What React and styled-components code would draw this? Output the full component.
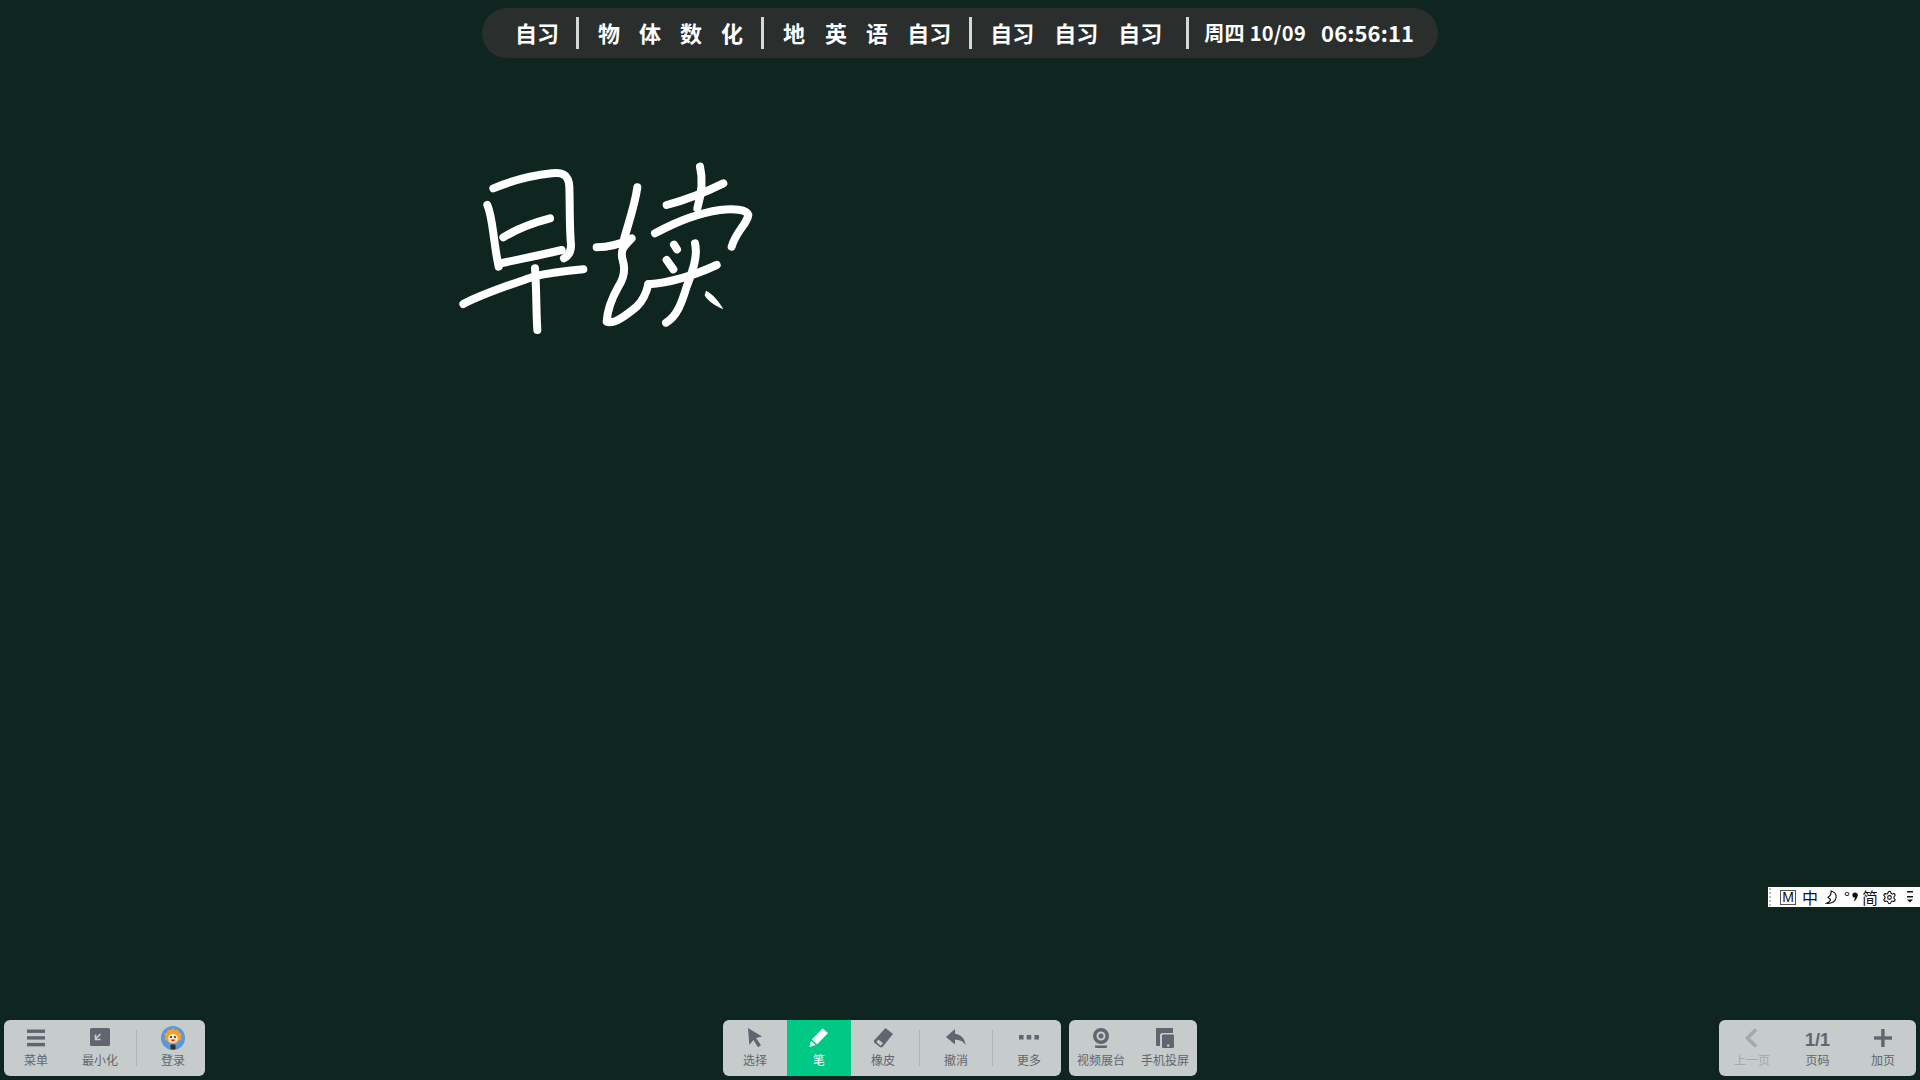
import React from "react";
import styled, { createGlobalStyle } from "styled-components";
import { Settings } from "lucide-react";

const GlobalStyle = createGlobalStyle`
  html, body {
    margin: 0;
    height: 100%;
    background: #0e261f;
    overflow: hidden;
  }
  #root { height: 100%; }
`;

const cjk = `"Noto Sans CJK SC", "Noto Sans", sans-serif`;

const Page = styled.div`
  position: relative;
  width: 1920px;
  height: 1080px;
  display: flex;
  flex-direction: column;
  background: #0e261f;
  font-family: ${cjk};
`;

const TopRow = styled.div`
  display: flex;
  justify-content: center;
  padding-top: 8px;
`;

const Schedule = styled.div`
  width: 956px;
  height: 50px;
  box-sizing: border-box;
  padding: 0 0 2px 33px;
  border-radius: 25px;
  background: #2a2f2e;
  display: flex;
  align-items: center;
  color: #fff;
`;

const Period = styled.span`
  flex-shrink: 0;
  font-size: 22px;
  font-weight: 700;
  line-height: 1;
  white-space: nowrap;
  margin-right: ${(p) => p.$gap}px;
`;

const Sep = styled.i`
  display: block;
  flex-shrink: 0;
  width: 3px;
  height: 32px;
  margin-top: 2px;
  background: #d6d8d7;
  margin-right: ${(p) => p.$gap}px;
`;

const Clock = styled.span`
  display: flex;
  align-items: center;
  gap: 15px;
  font-family: "Noto Sans CJK SC", "Open Sans", sans-serif;
  font-weight: 700;
  white-space: nowrap;
`;

const DateText = styled.span`
  font-size: 20px;
  letter-spacing: 0.3px;
`;

const TimeText = styled.span`
  font-size: 22px;
  letter-spacing: 0.1px;
`;

const Board = styled.div`
  flex: 1;
  position: relative;
`;

const Ink = styled.svg`
  position: absolute;
  left: 440px;
  top: 92px;
  width: 330px;
  height: 190px;
`;

const ImeBar = styled.div`
  position: absolute;
  left: 1768px;
  top: 887px;
  width: 152px;
  height: 20px;
  background: #fff;
  display: flex;
  align-items: center;
  color: #111;
  font-family: ${cjk};
`;

const ImeGrip = styled.i`
  width: 0;
  height: 18px;
  margin: 0 9px 0 1px;
  border-left: 2px dotted #bbb;
`;

const ImeMode = styled.span`
  flex-shrink: 0;
  width: 16px;
  height: 15px;
  box-sizing: border-box;
  border: 1px solid #555;
  font: 14px/13px "Liberation Sans", sans-serif;
  text-align: center;
  margin-right: ${(p) => p.$gap}px;
`;

const ImeGlyph = styled.span`
  flex-shrink: 0;
  font-size: 16px;
  line-height: 20px;
  width: ${(p) => p.$w || 16}px;
  text-align: center;
  margin-right: ${(p) => p.$gap || 0}px;
`;

const ImeIcon = styled.span`
  flex-shrink: 0;
  display: flex;
  margin-right: ${(p) => p.$gap || 0}px;
`;

const BottomRow = styled.div`
  display: grid;
  grid-template-columns: 1fr auto 1fr;
  align-items: end;
  padding: 0 4px 4px;
`;

const Side = styled.div`
  display: flex;
  justify-content: ${(p) => (p.$end ? "flex-end" : "flex-start")};
`;

const Center = styled.div`
  display: flex;
  gap: 8px;
`;

const Toolbar = styled.div`
  display: flex;
  height: 56px;
  background: #c5cccb;
  border-radius: 6px;
  overflow: hidden;
`;

const Tool = styled.div`
  width: ${(p) => p.$w || 64}px;
  height: 56px;
  box-sizing: border-box;
  padding-top: 7px;
  display: flex;
  flex-direction: column;
  align-items: center;
  background: ${(p) => (p.$active ? "#00c986" : "transparent")};
  color: ${(p) => (p.$active ? "#fff" : p.$off ? "#a4a9ad" : "#62656f")};
`;

const IconSlot = styled.div`
  height: 22px;
  display: flex;
  align-items: center;
  justify-content: center;
`;

const Label = styled.span`
  margin-top: 3px;
  font-size: 12px;
  line-height: 16px;
  white-space: nowrap;
`;

const PageNo = styled.span`
  padding-top: 3px;
  font: 700 18px/22px "Liberation Sans", sans-serif;
`;

const Divider = styled.div`
  width: 9px;
  display: flex;
  justify-content: center;
  padding: 10px 0;
  &::after {
    content: "";
    width: 1px;
    background: #aeb5b5;
  }
`;

const Icon = ({ children, size = 22 }) => (
  <svg width={size} height={size} viewBox="0 0 22 22" fill="currentColor">
    {children}
  </svg>
);

const MenuIcon = () => (
  <Icon>
    <rect x="2" y="2.5" width="18" height="3.4" />
    <rect x="2" y="9.2" width="18" height="3.4" />
    <rect x="2" y="15.9" width="18" height="3.4" />
  </Icon>
);

const MinimizeIcon = () => (
  <Icon>
    <rect x="1" y="1" width="20" height="18" rx="1.5" />
    <path d="M11.5 7 7 11.5M6.500 7.500v5h5" fill="none" stroke="#c5cccb" strokeWidth="1.7" />
  </Icon>
);

const Avatar = () => (
  <svg width="24" height="24" viewBox="0 0 24 24">
    <circle cx="12" cy="12" r="12" fill="#5b97dc" />
    <path d="M12 2l2.200 2 3-.6.800 3 3 1.300-1.500 2.800 1.200 3.200-3.200 1-1.500 2.800H8l-1.500-2.800-3.200-1 1.200-3.200L3 7.700 6 6.400l.8-3 3 .6z" fill="#f2a02a" />
    <ellipse cx="12" cy="12.500" rx="5" ry="4.600" fill="#fbe3c2" />
    <circle cx="10" cy="11" r="1" fill="#222" />
    <circle cx="14" cy="11" r="1" fill="#222" />
    <path d="M10 13.500h4a2 2 0 0 1-4 0z" fill="#c8352c" />
    <rect x="9.500" y="18.500" width="5" height="5" rx="1" fill="#33302e" />
  </svg>
);

const CursorIcon = () => (
  <Icon>
    <path d="M4 1l14 8.500-6 1.600 5 7.200-3 2-4.600-7.400L5.300 18z" />
  </Icon>
);

const PenIcon = () => (
  <Icon>
    <path d="M14.600 1.500l5.400 4.600L9.200 17.200 3.800 12.600z" />
    <path d="M3 14l4.600 4L1.400 20z" />
  </Icon>
);

const EraserIcon = () => (
  <Icon>
    <path d="M13.500 1l7.500 6-10.500 13-2 .5L2 15.500l0-2z" />
    <path d="M6.500 12.500l4.500 3.800-2.300 2.400-4.400-3.600z" fill="#c5cccb" />
  </Icon>
);

const UndoIcon = () => (
  <Icon>
    <path d="M10 2 1 10l9 7.500v-4.700c4 0 7.600.8 10.500 5.200C20 11.500 16 7.500 10 6.800z" />
  </Icon>
);

const DotsIcon = () => (
  <Icon>
    <rect x="1" y="8" width="4.600" height="4.600" rx=".6" />
    <rect x="8.700" y="8" width="4.600" height="4.600" rx=".6" />
    <rect x="16.400" y="8" width="4.600" height="4.600" rx=".6" />
  </Icon>
);

const CameraIcon = () => (
  <Icon>
    <path fillRule="evenodd" d="M11 1a8 8 0 1 1 0 16 8 8 0 0 1 0-16zm0 3.500a4.500 4.500 0 1 0 0 9 4.500 4.500 0 0 0 0-9z" />
    <circle cx="11" cy="9" r="2.500" />
    <path d="M5 18.500h12v1.500a1 1 0 0 1-1 1H6a1 1 0 0 1-1-1z" />
  </Icon>
);

const CastIcon = () => (
  <Icon>
    <path d="M2 1h17v5H8.500A2.500 2.500 0 0 0 6 8.500V19H3a1 1 0 0 1-1-1z" />
    <path fillRule="evenodd" d="M9 7.500h10a1 1 0 0 1 1 1V20a1 1 0 0 1-1 1H9a1 1 0 0 1-1-1V8.500a1 1 0 0 1 1-1zm5.200 9.800a1.200 1.200 0 1 0 0 2.400 1.200 1.200 0 0 0 0-2.400z" />
  </Icon>
);

const BackIcon = () => (
  <Icon>
    <path d="M15 2.500 6.500 11l8.500 8.500" fill="none" stroke="currentColor" strokeWidth="3.600" />
  </Icon>
);

const PlusIcon = () => (
  <Icon>
    <rect x="9.200" y="2" width="3.400" height="18" />
    <rect x="2" y="9.300" width="18" height="3.400" />
  </Icon>
);

const MoonIcon = () => (
  <svg width="12" height="15" viewBox="0 0 12 15">
    <path d="M6 1c4 1 5.500 3.800 5 6.800C10.500 11 7 14 1.500 13.300c2.500-1 4.300-2.300 4-3.800C5.200 8.300 3.500 8.500 3 7.200 4.500 6.500 6.500 4.500 6 1z" fill="none" stroke="#111" strokeWidth="1.100" />
  </svg>
);

// the IME's full-width comma sits mid height, so a text comma lands too low
const CommaIcon = () => (
  <svg width="6" height="10" viewBox="0 0 6 10">
    <circle cx="3" cy="3" r="2.600" fill="#111" />
    <path d="M3.200 2h2.400C5.800 5.500 4 8.500 1.500 9.500 2.800 7.500 3.200 5 3.200 2z" fill="#111" />
  </svg>
);

const ArrowsIcon = () => (
  <svg width="6" height="14" viewBox="0 0 6 14">
    <rect x="0" y="1" width="6" height="1.500" fill="#111" />
    <rect x="0" y="6" width="6" height="1.500" fill="#111" />
    <path d="M0 9.500h6l-3 3z" fill="#111" />
  </svg>
);

const inkStrokes = [
  "M160 115C215 92 280 76 335 70C370 66 386 76 388 110C390 170 388 230 393 285C393 305 385 318 372 325",
  "M142 165C155 195 158 240 165 285C168 310 172 330 176 350",
  "M190 262C225 240 280 218 330 205",
  "M180 340C240 328 305 315 365 300",
  "M70 462C130 430 210 405 280 380C330 368 385 362 430 358",
  "M285 355C290 420 288 480 292 540",
  "M592 112C585 165 565 220 552 268",
  "M470 292C505 292 545 280 575 265C550 290 540 300 548 330C556 355 555 380 535 410C515 445 502 480 500 515C520 525 560 495 590 470C610 450 620 425 625 403",
  "M625 403C690 398 765 375 830 345",
  "M780 50C790 90 785 130 772 175",
  "M680 165C735 150 800 125 850 100",
  "M645 250C700 220 770 190 840 180C880 175 920 178 925 195C920 225 890 240 875 290",
  "M702 284L711 298",
  "M680 330L700 358",
  "M765 280C775 320 755 370 740 410C725 460 710 500 678 518",
];

export default function App() {
  return (
    <Page>
      <GlobalStyle />
      <TopRow>
        <Schedule>
          <Period $gap={17}>自习</Period>
          <Sep $gap={19} />
          <Period $gap={19}>物</Period>
          <Period $gap={19}>体</Period>
          <Period $gap={19}>数</Period>
          <Period $gap={18}>化</Period>
          <Sep $gap={19} />
          <Period $gap={20}>地</Period>
          <Period $gap={19}>英</Period>
          <Period $gap={19}>语</Period>
          <Period $gap={18}>自习</Period>
          <Sep $gap={18} />
          <Period $gap={20}>自习</Period>
          <Period $gap={20}>自习</Period>
          <Period $gap={24}>自习</Period>
          <Sep $gap={15} />
          <Clock>
            <DateText>周四 10/09</DateText>
            <TimeText>06:56:11</TimeText>
          </Clock>
        </Schedule>
      </TopRow>

      <Board>
        <Ink viewBox="0 0 990 570" fill="none" stroke="#fff" strokeWidth="24" strokeLinecap="round" strokeLinejoin="round">
          {inkStrokes.map((d) => (
            <path key={d} d={d} />
          ))}
          <path d="M798 422C818 432 838 455 850 478C826 468 804 454 794 436z" fill="#fff" stroke="none" />
        </Ink>
      </Board>

      <ImeBar>
        <ImeGrip />
        <ImeMode $gap={6}>M</ImeMode>
        <ImeGlyph $gap={7}>中</ImeGlyph>
        <ImeIcon $gap={7}><MoonIcon /></ImeIcon>
        <ImeGlyph $w={6} $gap={2}>°</ImeGlyph>
        <ImeIcon $gap={4}><CommaIcon /></ImeIcon>
        <ImeGlyph $gap={4}>简</ImeGlyph>
        <ImeIcon $gap={10}><Settings size={15} strokeWidth={1.7} /></ImeIcon>
        <ImeIcon><ArrowsIcon /></ImeIcon>
      </ImeBar>

      <BottomRow>
        <Side>
          <Toolbar>
            <Tool>
              <IconSlot><MenuIcon /></IconSlot>
              <Label>菜单</Label>
            </Tool>
            <Tool>
              <IconSlot><MinimizeIcon /></IconSlot>
              <Label>最小化</Label>
            </Tool>
            <Divider />
            <Tool>
              <IconSlot><Avatar /></IconSlot>
              <Label>登录</Label>
            </Tool>
          </Toolbar>
        </Side>

        <Center>
          <Toolbar>
            <Tool>
              <IconSlot><CursorIcon /></IconSlot>
              <Label>选择</Label>
            </Tool>
            <Tool $active>
              <IconSlot><PenIcon /></IconSlot>
              <Label>笔</Label>
            </Tool>
            <Tool>
              <IconSlot><EraserIcon /></IconSlot>
              <Label>橡皮</Label>
            </Tool>
            <Divider />
            <Tool>
              <IconSlot><UndoIcon /></IconSlot>
              <Label>撤消</Label>
            </Tool>
            <Divider />
            <Tool>
              <IconSlot><DotsIcon /></IconSlot>
              <Label>更多</Label>
            </Tool>
          </Toolbar>
          <Toolbar>
            <Tool>
              <IconSlot><CameraIcon /></IconSlot>
              <Label>视频展台</Label>
            </Tool>
            <Tool>
              <IconSlot><CastIcon /></IconSlot>
              <Label>手机投屏</Label>
            </Tool>
          </Toolbar>
        </Center>

        <Side $end>
          <Toolbar>
            <Tool $w={66} $off>
              <IconSlot><BackIcon /></IconSlot>
              <Label>上一页</Label>
            </Tool>
            <Tool $w={65}>
              <IconSlot><PageNo>1/1</PageNo></IconSlot>
              <Label>页码</Label>
            </Tool>
            <Tool $w={66}>
              <IconSlot><PlusIcon /></IconSlot>
              <Label>加页</Label>
            </Tool>
          </Toolbar>
        </Side>
      </BottomRow>
    </Page>
  );
}
